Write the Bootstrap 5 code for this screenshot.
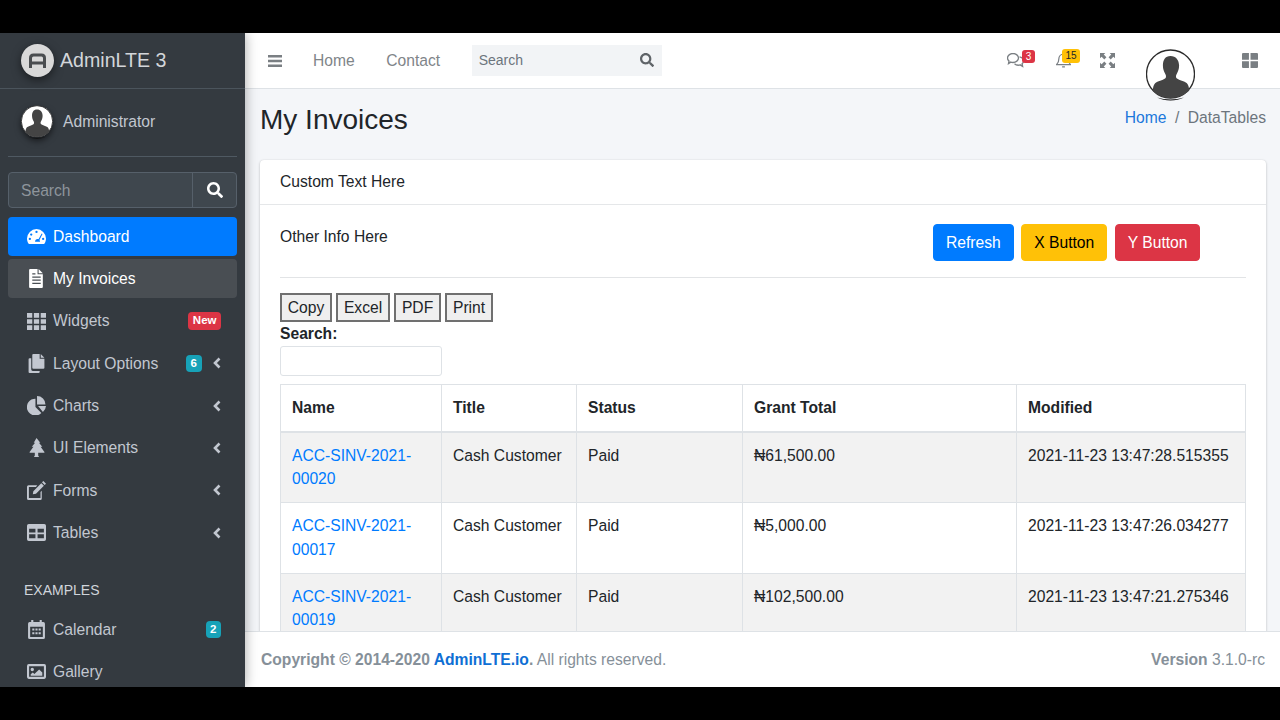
<!DOCTYPE html>
<html lang="en">
<head>
  <meta charset="UTF-8">
  <title>My Invoices</title>
  <meta name="viewport" content="width=device-width, initial-scale=1">
  <link href="https://cdn.jsdelivr.net/npm/bootstrap@5.3.0/dist/css/bootstrap.min.css" rel="stylesheet">
  <style>
    html, body { height: 720px; overflow: hidden; }
    body { background: #000; font-family: "Liberation Sans", Arial, sans-serif; font-size: 15.65px; color: #212529; }
    a { text-decoration: none; color: #007bff; }
    .btn { --bs-btn-font-size: 15.65px; --bs-btn-border-radius: 4px; }
    .btn-primary { --bs-btn-bg: #007bff; --bs-btn-border-color: #007bff; }
    .letterbox { height: 33px; background: #000; }
    .frame { height: 654px; overflow: hidden; background: #f4f6f9; position: relative; }

    /* sidebar */
    .side { width: 245px; flex: none; background: #343a40; color: #c2c7d0; overflow: hidden; box-shadow: 0 0 12px rgba(0,0,0,.35); z-index: 2; }
    .side-brand { height: 56px; padding-left: 21px; border-bottom: 1px solid #4b545c; gap: 6px; font-size: 19.6px; color: #d3d6da; }
    .side-brand svg { width: 33px; height: 33px; filter: drop-shadow(0 3px 5px rgba(0,0,0,.5)); }
    .side-user { margin: 0 8px; height: 68px; padding-left: 13px; gap: 10px; border-bottom: 1px solid #4f5962; }
    .side-user svg { width: 32px; height: 34px; margin-top: -1px; filter: drop-shadow(0 3px 3px rgba(0,0,0,.55)); }
    .side-user span { margin-top: -1px; }
    .side-search { margin: 15px 8px 9px; height: 36px; border: 1px solid #56606a; border-radius: 4px; background: #3f474e; }
    .side-search span { flex: 1; padding: 1px 0 0 12px; color: #8e959c; }
    .side-search div { width: 44px; height: 100%; border-left: 1px solid #56606a; }
    .side-search svg { width: 16px; height: 16px; fill: #fff; }
    .side-nav { list-style: none; margin: 0 8px; padding: 0; }
    .side-nav li { height: 39px; margin-bottom: 3.3px; padding: 0 16px; border-radius: 4px; }
    .side-nav li > svg:first-child { width: 19px; height: 19px; margin-right: 7px; margin-left: 3px; fill: currentColor; flex: none; }
    .side-nav .is-primary { background: #007bff; color: #fff; }
    .side-nav .is-current { background: #494e53; color: #fff; }
    .side-nav .side-head { height: auto; margin: 30px 0 11px; padding: 0 16px; font-size: 14px; line-height: 17px; color: #d0d4db; }
    .chev { width: 8px; height: 12px; fill: none; stroke: #c2c7d0; stroke-width: 2.6; margin-left: 11.5px; margin-right: 0; }
    .tag { font-size: 11.5px; font-weight: 700; line-height: 1; padding: 3px 4.5px; border-radius: 4px; color: #fff; }
    .tag-red { background: #dc3545; }
    .tag-teal { background: #17a2b8; }

    /* top bar */
    .top { height: 56px; flex: none; background: #fff; border-bottom: 1px solid #dee2e6; color: #7f8589; padding-left: 23px; padding-right: 22px; }
    .top-bars { width: 14px; height: 14px; fill: #7a7f83; margin-right: 31px; }
    .top-link { margin-right: 31.5px; }
    .top-search { width: 190px; height: 31px; background: #f2f4f6; padding: 0 8px 1px 7px; font-size: 14px; color: #6c757d; }
    .top-search svg { width: 14px; height: 14px; fill: #5f6468; }
    .top-ico { position: relative; height: 15px; }
    .top-ico svg { width: 100%; height: 100%; display: block; }
    .top-msg { width: 17px; margin-right: 32px; }
    .top-bell { width: 15px; margin-right: 29px; }
    .top-expand { width: 15px; margin-right: 127px; }
    .top-grid { width: 16px; }
    .pip { position: absolute; font-size: 10px; line-height: 13px; height: 13px; border-radius: 3px; text-align: center; }
    .pip-red { left: 15px; top: -3px; width: 13px; background: #dc3545; color: #fff; }
    .pip-yellow { left: 6px; top: -4px; width: 18px; height: 14px; background: #ffc107; color: #212529; }
    .head-avatar { position: absolute; left: 1146px; top: 16px; width: 49px; height: 52px; z-index: 3; }

    /* content */
    .page-head { height: 71px; padding: 0 14px 0 15px; }
    .page-head h1 { font-size: 28px; font-weight: 400; margin: 0 0 10px; line-height: 1.2; }
    .crumbs { margin-bottom: 14px; color: #6c757d; }
    .crumbs a { color: #1b78dc; }
    .crumbs i { font-style: normal; padding: 0 8.5px; }
    .panel { margin: 0 14px 0 15px; border: 0; border-radius: 4px; box-shadow: 0 0 1px rgba(0,0,0,.125), 0 1px 3px rgba(0,0,0,.2); }
    .panel-head { height: 45px; padding: 0 20px 1px; border-bottom: 1px solid #e5e7e9; }
    .panel-body { padding: 19px 20px 20px; }
    .info-side { width: 653px; padding-top: 1px; }
    .action-row { gap: 7.5px; }
    .sep { margin: 16px 0 15px; border: 0; border-top: 1px solid #e2e4e6; opacity: 1; }
    .dt-btn { padding: .5px 5.7px; color: #212529; background: #efefef; border: 2px solid #707070; }
    .dt-label { display: block; font-weight: 700; margin-top: .5px; }
    .dt-input { display: block; width: 162px; height: 30px; border: 1px solid #dee2e6; border-radius: 3px; margin-bottom: 8px; }
    .grid-table { width: 966px; table-layout: fixed; margin: 0; }
    .grid-table th, .grid-table td { padding: 11.2px 11px; }
    .grid-table thead th { border-bottom: 2px solid #dee2e6; }
    .grid-table a { color: #007bff; }
    .grid-table .c1 { width: 161px; }
    .grid-table .c2 { width: 135px; }
    .grid-table .c3 { width: 166px; }
    .grid-table .c4 { width: 274px; }

    /* footer */
    .foot { height: 56px; flex: none; background: #fff; border-top: 1px solid #dee2e6; padding: 0 15px 0 16px; color: #869099; z-index: 1; }
    .foot a { color: #0f6fd4; }
  </style>
</head>
<body>

  <svg width="0" height="0" class="d-block" style="position:absolute">
    <defs>
      <symbol id="i-person" viewBox="0 0 49 52">
        <circle cx="24.5" cy="25" r="24" fill="#fff" stroke="#2b2b2b" stroke-width="1.3"/>
        <path d="M24.5 7c5.4 0 8.6 4.2 8.6 9.600 0 3.400-1 6.100-2.400 8.300-1 1.500-1 3.600.2 4.600 2.300 1.700 7.500 2.500 10 4.700 1.600 1.400 2.200 5 2.400 7.300C39 45.600 32.200 49 24.500 49S10 45.600 6.700 41.500c.2-2.300.8-5.900 2.400-7.300 2.500-2.200 7.700-3 10-4.700 1.200-1 1.200-3.100.2-4.600-1.400-2.200-2.400-4.900-2.400-8.300C16.900 11.200 19.100 7 24.500 7z" fill="#444"/>
        <path d="M11 48.500c8 4 19 4 27 0-8 2.500-19 2.500-27 0z" fill="#111"/>
      </symbol>
      <symbol id="i-search" viewBox="0 0 512 512">
        <path d="M505 442.700L405.300 343c-4.500-4.500-10.600-7-17-7H372c27.600-35.300 44-79.700 44-128C416 93.100 322.900 0 208 0S0 93.100 0 208s93.100 208 208 208c48.300 0 92.700-16.400 128-44v16.300c0 6.400 2.500 12.500 7 17l99.700 99.700c9.400 9.400 24.600 9.400 33.900 0l28.300-28.300c9.400-9.400 9.400-24.600.1-34zM208 336c-70.700 0-128-57.200-128-128 0-70.700 57.200-128 128-128 70.700 0 128 57.200 128 128 0 70.700-57.200 128-128 128z"/>
      </symbol>
      <symbol id="i-gauge" viewBox="0 0 18 18">
        <path fill-rule="evenodd" d="M9 2a9 9 0 0 0-9 9c0 1.700.5 3.200 1.200 4.500.2.300.5.500.9.500h13.800c.4 0 .7-.2.900-.5.700-1.300 1.200-2.800 1.200-4.500a9 9 0 0 0-9-9zM9 3.600a1.100 1.100 0 1 1 0 2.200 1.100 1.100 0 0 1 0-2.200zM4 6.100a1.100 1.100 0 1 1 0 2.200 1.100 1.100 0 0 1 0-2.200zM2.700 10.200a1.100 1.100 0 1 1 0 2.200 1.100 1.100 0 0 1 0-2.200zM15.300 10.200a1.100 1.100 0 1 1 0 2.200 1.100 1.100 0 0 1 0-2.200zM13.900 6.200l.8.400-2.900 5.700c.5.600.6 1.300.6 1.700H7.600c0-1.300 1-2.600 2.500-2.600.3 0 .6 0 .8.100z"/>
      </symbol>
      <symbol id="i-file" viewBox="0 0 18 18">
        <path fill-rule="evenodd" d="M3 0h7v5h5v12a1 1 0 0 1-1 1H3a1 1 0 0 1-1-1V1a1 1 0 0 1 1-1zM5 4v1.200h3V4zM5 7v1.200h8V7zM5 10v1.200h8V10zM5 13v1.200h8V13zM11 0l4 4h-4z"/>
      </symbol>
      <symbol id="i-grid" viewBox="0 0 18 16">
        <path d="M0 0h5v4.400H0zM6.500 0h5v4.400h-5zM13 0h5v4.400h-5zM0 5.800h5v4.400H0zM6.500 5.800h5v4.400h-5zM13 5.800h5v4.400h-5zM0 11.600h5V16H0zM6.500 11.600h5V16h-5zM13 11.600h5V16h-5z"/>
      </symbol>
      <symbol id="i-copy" viewBox="0 0 18 18">
        <path d="M6 0h6v4.500h4.500V13a1 1 0 0 1-1 1H6a1 1 0 0 1-1-1V1a1 1 0 0 1 1-1zM13 0l3.500 3.500H13zM4 4v10.500A1.500 1.500 0 0 0 5.500 16H12v1a1 1 0 0 1-1 1H2.500a1 1 0 0 1-1-1V5a1 1 0 0 1 1-1z"/>
      </symbol>
      <symbol id="i-pie" viewBox="0 0 18 18">
        <path d="M8 2.500v8l5.600 5.600A8 8 0 1 1 8 2.500zM9.500 0A8 8 0 0 1 17.500 8H9.500zM10.500 9.500H18a8 8 0 0 1-2.900 5.600z"/>
      </symbol>
      <symbol id="i-tree" viewBox="0 0 18 18">
        <path d="M9 0l3.600 4.400h-1.300l3.200 4h-1.600l3.600 4.800c.2.400 0 .8-.5.800H3c-.5 0-.7-.4-.5-.8l3.600-4.800H4.500l3.200-4H6.400zM7.400 14h3.200v2.600l.8 1.400H6.600l.8-1.400z"/>
      </symbol>
      <symbol id="i-edit" viewBox="0 0 18 18">
        <path d="M12.800 10.500l1.200-1.200v7.200a1.500 1.500 0 0 1-1.500 1.500h-11A1.500 1.500 0 0 1 0 16.500v-11A1.500 1.500 0 0 1 1.500 4h8.200L8.500 5.800H1.800v10.400h11zM15.500 0l2.500 2.500-1.300 1.300-2.500-2.500zM13.500 2.100L16 4.600 8.500 12.100l-3 .5.500-3z"/>
      </symbol>
      <symbol id="i-table" viewBox="0 0 18 16">
        <path fill-rule="evenodd" d="M1.700 0h14.600A1.700 1.700 0 0 1 18 1.700v12.600a1.700 1.700 0 0 1-1.700 1.700H1.700A1.700 1.700 0 0 1 0 14.300V1.700A1.700 1.700 0 0 1 1.700 0zM2 4.500v3.500h6V4.500zM10 4.500v3.500h6V4.500zM2 9.600v3.900h6V9.600zM10 9.600v3.900h6V9.600z"/>
      </symbol>
      <symbol id="i-cal" viewBox="0 0 18 18">
        <path fill-rule="evenodd" d="M4 0h2v2h6V0h2v2h1.500A1.500 1.500 0 0 1 17 3.500v13a1.500 1.500 0 0 1-1.500 1.500h-13A1.500 1.500 0 0 1 1 16.500v-13A1.500 1.500 0 0 1 2.500 2H4zM3 6.500v9.500h12V6.500zM5 8h2v2H5zM8 8h2v2H8zM11 8h2v2h-2zM5 11.500h2v2H5zM8 11.500h2v2H8zM11 11.500h2v2h-2z"/>
      </symbol>
      <symbol id="i-image" viewBox="0 0 18 16">
        <path fill-rule="evenodd" d="M1.700 1h14.600A1.700 1.700 0 0 1 18 2.700v10.600a1.700 1.700 0 0 1-1.700 1.700H1.700A1.700 1.700 0 0 1 0 13.300V2.700A1.700 1.700 0 0 1 1.700 1zM2 3v10h14V3zM5 4.500a1.600 1.600 0 1 1 0 3.200 1.600 1.600 0 0 1 0-3.200zM3.500 12v-1.500L5.500 9l1.500 1.300L11.500 6l3 3v3z"/>
      </symbol>
      <symbol id="i-chev" viewBox="0 0 8 12">
        <path d="M6.500 1.500L2 6l4.500 4.500"/>
      </symbol>
    </defs>
  </svg>

  <div class="letterbox"></div>

  <div class="frame d-flex">
    <!-- sidebar -->
    <aside class="side">
      <div class="side-brand d-flex align-items-center">
        <svg viewBox="0 0 33 33">
          <circle cx="16.500" cy="16.500" r="16.500" fill="#d9d9d9"/>
          <path d="M9.500 24V14c0-2 1-3 3-3h8c2 0 3 1 3 3v10M9.500 19h14" fill="none" stroke="#4a4d50" stroke-width="3"/>
        </svg>
        <span>AdminLTE 3</span>
      </div>
      <div class="side-user d-flex align-items-center">
        <svg><use href="#i-person"/></svg>
        <span>Administrator</span>
      </div>
      <div class="side-search d-flex align-items-center">
        <span>Search</span>
        <div class="d-flex align-items-center justify-content-center"><svg><use href="#i-search"/></svg></div>
      </div>
      <ul class="side-nav">
        <li class="is-primary d-flex align-items-center"><svg><use href="#i-gauge"/></svg>Dashboard</li>
        <li class="is-current d-flex align-items-center"><svg><use href="#i-file"/></svg>My Invoices</li>
        <li class="d-flex align-items-center"><svg><use href="#i-grid"/></svg>Widgets<span class="tag tag-red ms-auto">New</span></li>
        <li class="d-flex align-items-center"><svg><use href="#i-copy"/></svg>Layout Options<span class="tag tag-teal ms-auto">6</span><svg class="chev"><use href="#i-chev"/></svg></li>
        <li class="d-flex align-items-center"><svg><use href="#i-pie"/></svg>Charts<svg class="chev ms-auto"><use href="#i-chev"/></svg></li>
        <li class="d-flex align-items-center"><svg><use href="#i-tree"/></svg>UI Elements<svg class="chev ms-auto"><use href="#i-chev"/></svg></li>
        <li class="d-flex align-items-center"><svg><use href="#i-edit"/></svg>Forms<svg class="chev ms-auto"><use href="#i-chev"/></svg></li>
        <li class="d-flex align-items-center"><svg><use href="#i-table"/></svg>Tables<svg class="chev ms-auto"><use href="#i-chev"/></svg></li>
        <li class="side-head">EXAMPLES</li>
        <li class="d-flex align-items-center"><svg><use href="#i-cal"/></svg>Calendar<span class="tag tag-teal ms-auto">2</span></li>
        <li class="d-flex align-items-center"><svg><use href="#i-image"/></svg>Gallery</li>
      </ul>
    </aside>

    <div class="flex-grow-1 d-flex flex-column" style="min-width:0">
      <!-- top bar -->
      <nav class="top d-flex align-items-center">
        <svg class="top-bars" viewBox="0 0 14 14"><path d="M0 1h14v2.400H0zM0 5.800h14v2.400H0zM0 10.600h14v2.400H0z"/></svg>
        <span class="top-link">Home</span>
        <span class="top-link">Contact</span>
        <div class="top-search d-flex align-items-center justify-content-between">
          <span>Search</span>
          <svg><use href="#i-search"/></svg>
        </div>
        <div class="top-ico top-msg ms-auto">
          <svg viewBox="0.500 3 17 13.500" preserveAspectRatio="none" fill="none" stroke="#7a7f83" stroke-width="1.300"><path d="M6.500 3.500c3 0 5.500 1.800 5.500 4s-2.500 4-5.500 4c-.8 0-1.500-.1-2.200-.3L2 12.500l.5-2.300C1.500 9.400 1 8.500 1 7.500c0-2.200 2.500-4 5.500-4z"/><path d="M13 6.500c2.300.4 4 1.900 4 3.700 0 1-.5 1.800-1.400 2.500l.5 2.300-2.500-1.300c-2 .5-4.200.1-5.600-1"/></svg>
          <span class="pip pip-red">3</span>
        </div>
        <div class="top-ico top-bell">
          <svg viewBox="1 1.500 16 14.500" fill="none" stroke="#7a7f83" stroke-width="1.300"><path d="M9 2c3 0 5 2.200 5 5.200 0 3.800 1.500 4.800 2.500 6H1.500c1-1.200 2.500-2.200 2.500-6C4 4.200 6 2 9 2zM7.500 15.500h3"/></svg>
          <span class="pip pip-yellow">15</span>
        </div>
        <div class="top-ico top-expand">
          <svg viewBox="0 0 14 14" fill="#7a7f83"><path d="M0 0h5L3.500 1.500 6 4 4 6 1.500 3.500 0 5zM14 0v5l-1.500-1.500L10 6 8 4l2.500-2.500L9 0zM0 14V9l1.500 1.500L4 8l2 2-2.500 2.500L5 14zM14 14H9l1.500-1.500L8 10l2-2 2.500 2.500L14 9z"/></svg>
        </div>
        <div class="top-ico top-grid">
          <svg viewBox="0 0 15 14" fill="#7a7f83"><path d="M0 1a1 1 0 0 1 1-1h5.500v6.200H0zM8 0h6a1 1 0 0 1 1 1v5.200H8zM0 7.800h6.500V14H1a1 1 0 0 1-1-1zM8 7.800h7V13a1 1 0 0 1-1 1H8z"/></svg>
        </div>
      </nav>

      <!-- content -->
      <main class="flex-grow-1 overflow-hidden">
        <div class="page-head d-flex justify-content-between align-items-center">
          <h1>My Invoices</h1>
          <div class="crumbs"><a href="#">Home</a><i>/</i>DataTables</div>
        </div>
        <div class="card panel">
          <div class="panel-head d-flex align-items-center">Custom Text Here</div>
          <div class="panel-body">
            <div class="d-flex">
              <div class="info-side">Other Info Here</div>
              <div class="d-flex action-row">
                <button class="btn btn-primary">Refresh</button>
                <button class="btn btn-warning">X Button</button>
                <button class="btn btn-danger">Y Button</button>
              </div>
            </div>
            <hr class="sep">
            <div>
              <button class="dt-btn">Copy</button>
              <button class="dt-btn">Excel</button>
              <button class="dt-btn">PDF</button>
              <button class="dt-btn">Print</button>
            </div>
            <label class="dt-label">Search:</label>
            <input class="dt-input" type="text">
            <table class="table table-bordered table-striped grid-table" id="invoiceTable">
              <thead>
                <tr><th class="c1">Name</th><th class="c2">Title</th><th class="c3">Status</th><th class="c4">Grant Total</th><th>Modified</th></tr>
              </thead>
              <tbody></tbody>
            </table>
          </div>
        </div>
      </main>

      <footer class="foot d-flex align-items-center justify-content-between">
        <div><strong>Copyright © 2014-2020 <a href="#">AdminLTE.io</a>.</strong> All rights reserved.</div>
        <div><strong>Version</strong> 3.1.0-rc</div>
      </footer>
    </div>

    <svg class="head-avatar"><use href="#i-person"/></svg>
  </div>

  <div class="letterbox"></div>

  <script src="https://cdn.jsdelivr.net/npm/bootstrap@5.3.0/dist/js/bootstrap.bundle.min.js"></script>
  <script>
    const invoices = [
      ['ACC-SINV-2021-00020', '₦61,500.00', '2021-11-23 13:47:28.515355'],
      ['ACC-SINV-2021-00017', '₦5,000.00', '2021-11-23 13:47:26.034277'],
      ['ACC-SINV-2021-00019', '₦102,500.00', '2021-11-23 13:47:21.275346']
    ];
    document.querySelector('#invoiceTable tbody').innerHTML = invoices.map(r => `
      <tr>
        <td><a href="#">${r[0]}</a></td>
        <td>Cash Customer</td>
        <td>Paid</td>
        <td>${r[1]}</td>
        <td>${r[2]}</td>
      </tr>
    `).join('');
  </script>
</body>
</html>
